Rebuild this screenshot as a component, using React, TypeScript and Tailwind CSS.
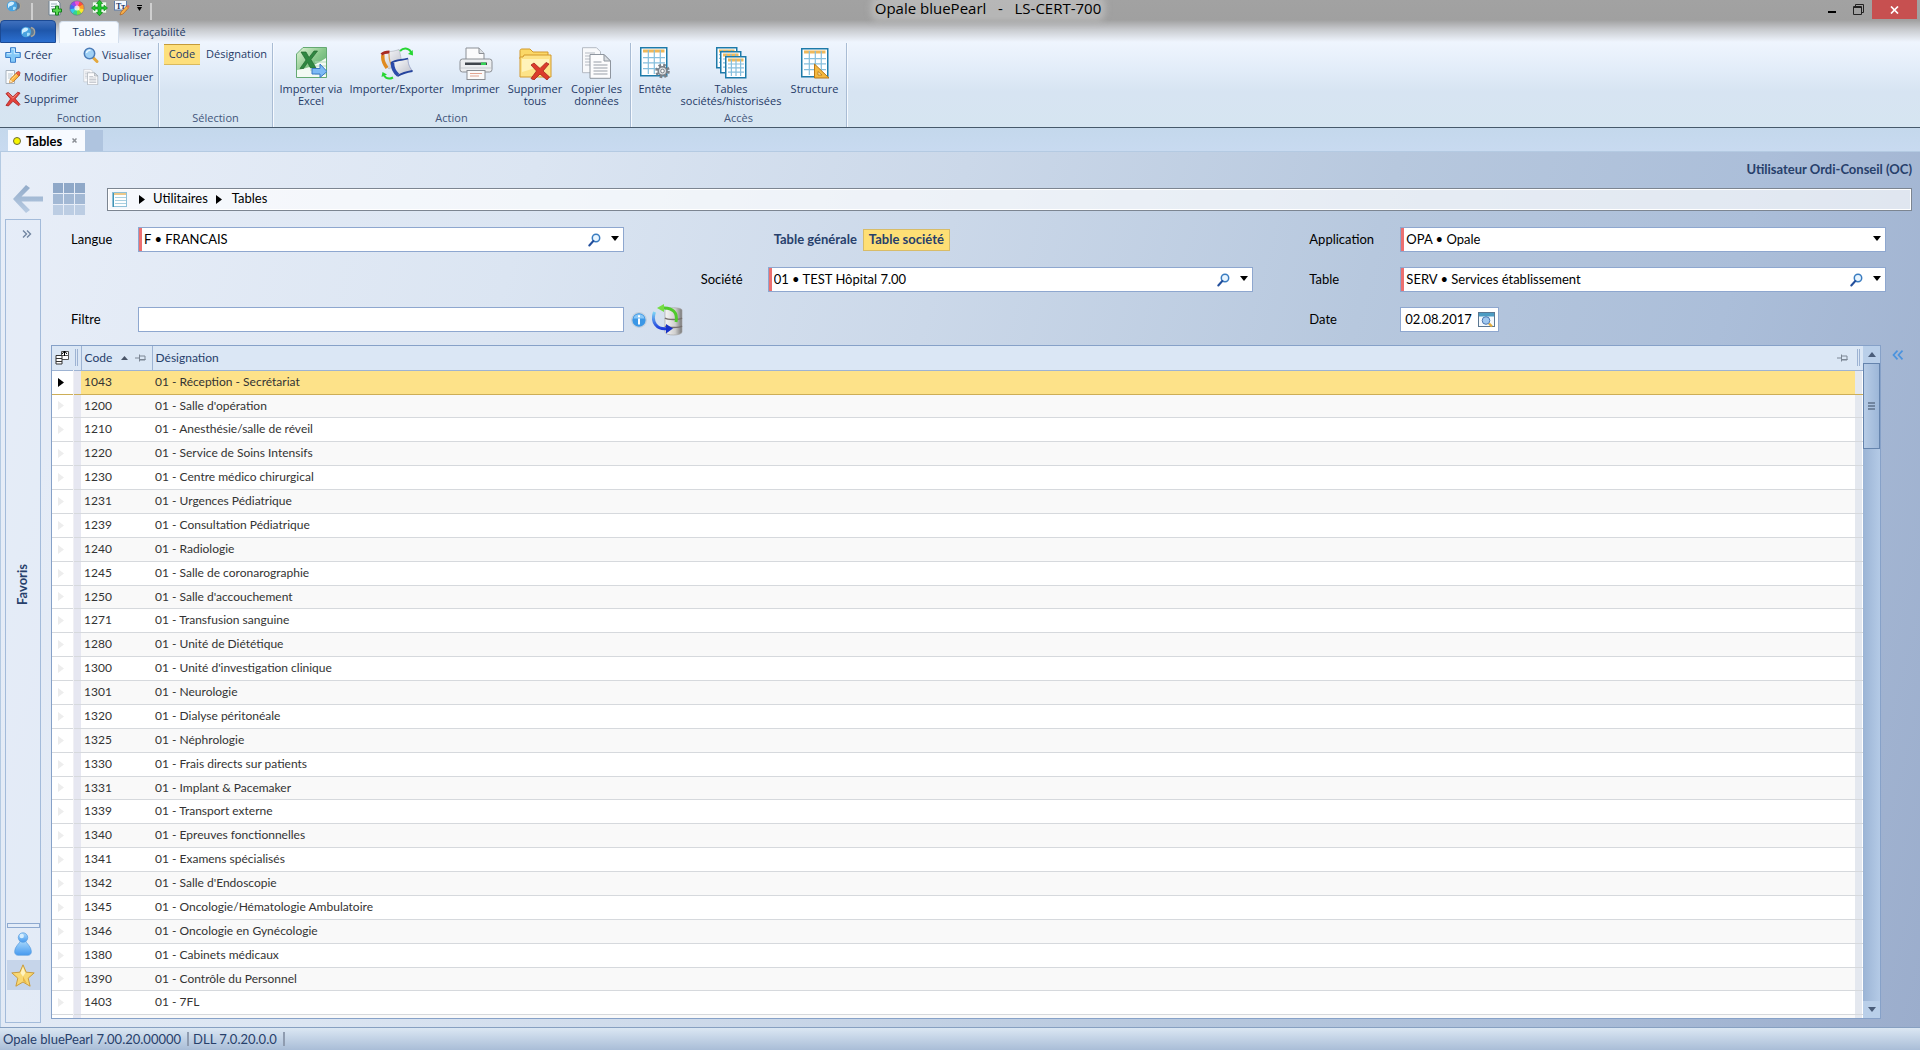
import type { ReactNode } from "react";

const rows: [string, string][] = [
  ["1043", "Réception - Secrétariat"],
  ["1200", "Salle d'opération"],
  ["1210", "Anesthésie/salle de réveil"],
  ["1220", "Service de Soins Intensifs"],
  ["1230", "Centre médico chirurgical"],
  ["1231", "Urgences Pédiatrique"],
  ["1239", "Consultation Pédiatrique"],
  ["1240", "Radiologie"],
  ["1245", "Salle de coronarographie"],
  ["1250", "Salle d'accouchement"],
  ["1271", "Transfusion sanguine"],
  ["1280", "Unité de Diététique"],
  ["1300", "Unité d'investigation clinique"],
  ["1301", "Neurologie"],
  ["1320", "Dialyse péritonéale"],
  ["1325", "Néphrologie"],
  ["1330", "Frais directs sur patients"],
  ["1331", "Implant & Pacemaker"],
  ["1339", "Transport externe"],
  ["1340", "Epreuves fonctionnelles"],
  ["1341", "Examens spécialisés"],
  ["1342", "Salle d'Endoscopie"],
  ["1345", "Oncologie/Hématologie Ambulatoire"],
  ["1346", "Oncologie en Gynécologie"],
  ["1380", "Cabinets médicaux"],
  ["1390", "Contrôle du Personnel"],
  ["1403", "7FL"],
];

/* ---------- icons ---------- */

function Globe({ className = "" }: { className?: string }) {
  return (
    <svg width="16" height="12" viewBox="0 0 16 12" className={className}>
      <circle cx="10.5" cy="6" r="4.6" fill="#5b7a96" />
      <path d="M11 1.5a4.6 4.6 0 0 1 0 9" fill="none" stroke="#a9a49a" strokeWidth="1.4" />
      <circle cx="6" cy="6" r="5.2" fill="#4aa3df" />
      <path d="M2 4c2-3 5-2.5 6-1.5S6 6 4.500 6 3 8 2 8Z" fill="#cfeeff" />
      <path d="M7 7c1.500-.5 3 0 3 1s-2 2.500-3 2Z" fill="#a5dcf7" />
    </svg>
  );
}

function PageAdd() {
  return (
    <svg width="16" height="15" viewBox="0 1 16 15">
      <path d="M2 0h8l3 3v12H2Z" fill="#f6fbff" stroke="#6f8191" />
      <path d="M4 4h6M4 6.500h6M4 9h4" stroke="#9db0be" />
      <path d="M8.500 6h3v3h3v3h-3v3h-3v-3h-3V9h3Z" fill="#57d94f" stroke="#167f1e" />
    </svg>
  );
}

function ColorWheel() {
  const colors = ["#ff4b3a", "#ff9d2b", "#ffe92e", "#7ee33c", "#34d88d", "#35c9f0", "#3a6df0", "#9446ec", "#f04fd0"];
  return (
    <svg width="16" height="16" viewBox="-8 -8 16 16">
      {colors.map((c, i) => (
        <path key={c} d="M0 0L0 -7.300A7.300 7.300 0 0 1 4.900 -5.400Z" fill={c} transform={`rotate(${i * 40 + 20})`} />
      ))}
      <circle r="2.600" fill="#fff" opacity=".75" />
      <circle r="7.200" fill="none" stroke="#6b6b8b" strokeWidth=".6" />
    </svg>
  );
}

function MoveArrows() {
  return (
    <svg width="17" height="16" viewBox="0 0 17 16">
      <rect x="1.500" y="2" width="14" height="11" fill="#eefaee" stroke="#88a088" strokeWidth=".6" />
      <path d="M8.500 0l3 3.500H10V7h3V5.200L16.500 8 13 10.800V9h-3v3.500h1.500l-3 3.300-3-3.300H7V9H4v1.800L.5 8 4 5.200V7h3V3.500H5.500Z" fill="#20c52b" stroke="#0b8a17" strokeWidth=".7" />
    </svg>
  );
}

function FontIcon() {
  return (
    <svg width="16" height="15" viewBox="0 0 16 15">
      <rect x=".5" y="-1" width="12" height="10" fill="#f3f8ff" stroke="#5d7dab" />
      <text x="2" y="7.500" fontSize="8" fontWeight="700" fontFamily="Liberation Serif, serif" fill="#1c3665">Tт</text>
      <path d="M6 14l1-3 5.500-6 2 2L9 13Z" fill="#f4ad4b" stroke="#b0641e" strokeWidth=".7" />
      <path d="M12.500 5l2 2 1.200-1.500-1.800-1.800Z" fill="#e56f61" />
    </svg>
  );
}

function PlusIcon() {
  return (
    <svg width="16" height="16" viewBox="0 0 16 16">
      <path d="M5.500.7h5v4.800h4.800v5h-4.800v4.800h-5v-4.800H.7v-5h4.800Z" fill="#83c8f7" stroke="#3c7fcb" />
      <path d="M6.700 2h2.600v4.700H14M2 6.700h4.700" stroke="#d3eeff" fill="none" />
    </svg>
  );
}

function PencilIcon() {
  return (
    <svg width="16" height="16" viewBox="0 0 16 16">
      <path d="M1 1.500h8.500v13H1Z" fill="#fafcfd" stroke="#a7b2bd" />
      <path d="M3 5h5M3 7h4M3 9h3" stroke="#b9c5cf" />
      <path d="M4.500 13.800l1-4 6.700-6.600 2.800 2.800-6.600 6.700Z" fill="#fbb540" stroke="#b96d18" strokeWidth=".8" />
      <path d="M11.200 4.200l1.600-1.700c1.200-.6 2.700.8 2.200 2L13.800 6.700Z" fill="#ee5e4a" stroke="#b03020" strokeWidth=".5" />
      <path d="M4.300 14l1-3.400 2.400 2.200Z" fill="#f6dfb8" />
      <path d="M6.500 10.700l5.200-5.100" stroke="#ffe093" />
    </svg>
  );
}

function RedCross() {
  return (
    <svg width="16" height="16" viewBox="0 0 17 16">
      <path d="M1 2.300L3.300.8 8.400 5.700 13.500.8l2.500.9-5.100 6.100 5 5.900-1.400 1.500-6-4.800-4.800 5-2.700-.6 4.900-6.900Z" fill="#e2413a" stroke="#a51e1e" strokeWidth=".8" />
      <path d="M3 2l5.400 5.200 4.800-4.700" stroke="#f79c92" strokeWidth=".9" fill="none" />
    </svg>
  );
}

function Magnifier() {
  return (
    <svg width="16" height="16" viewBox="0 0 16 16">
      <path d="M10 10.500l4 4" stroke="#e4a83c" strokeWidth="3" strokeLinecap="round" />
      <circle cx="6.500" cy="6.500" r="5.200" fill="#9fd0f5" stroke="#4c7cb8" strokeWidth="1.500" />
      <path d="M3.500 6c.3-2 2-3 4-2.500" stroke="#e9f7ff" strokeWidth="1.500" fill="none" />
    </svg>
  );
}

function CopyIcon({ size }: { size: number }) {
  return (
    <svg width={size} height={size} viewBox="0 0 31 32">
      <path d="M1 .7h14l4 4v21H1Z" fill="#f8f9fb" stroke="#b4bac3" />
      <path d="M3.500 6h10M3.500 9h10M3.500 12h10M3.500 15h10M3.500 18h10" stroke="#b5bac2" />
      <path d="M8.500 7.500h14l6.500 6.500v17.300H8.500Z" fill="#fcfcfd" stroke="#8f969f" />
      <path d="M22.500 7.500V14H29Z" fill="#d9dde2" stroke="#8f969f" />
      <path d="M12 15h8M12 18h14M12 21h14M12 24h14M12 27h14" stroke="#979da6" />
    </svg>
  );
}

function ExcelIcon() {
  return (
    <svg width="31" height="31" viewBox="0 0 31 31">
      <defs>
        <linearGradient id="xl" x1="0" y1="0" x2="1" y2="1">
          <stop offset="0" stopColor="#e3f4d7" />
          <stop offset=".5" stopColor="#86c78a" />
          <stop offset="1" stopColor="#4f9c66" />
        </linearGradient>
      </defs>
      <path d="M7 .5h23.500v30H.5V7Z" fill="url(#xl)" stroke="#64a972" />
      <path d="M1 23c9-1 17-4 29-12v19H1Z" fill="#f3faf3" />
      <path d="M19 15h11M17 19h13M14 23h16M19 27h11" stroke="#b4d9bb" />
      <path d="M5 5h5l3 5.500L18 4h3.500l-6.500 8.500L20 21h-5.500l-2.800-5.500L7.500 21.500H4l6-8.500Z" fill="#2f8741" stroke="#23672f" strokeWidth=".7" />
      <path d="M16 21.500h8v-4.500l7 7.500-7 6V27h-8Z" fill="#7dbaf5" stroke="#3a78c6" />
    </svg>
  );
}

function TransferIcon() {
  return (
    <svg width="34" height="33" viewBox="0 0 34 33">
      <defs>
        <linearGradient id="bookA" x1="0" y1="0" x2="1" y2="1">
          <stop offset="0" stopColor="#ffffff" />
          <stop offset="1" stopColor="#b9bcc8" />
        </linearGradient>
      </defs>
      <path d="M2 7c5-4 8-1 17-4.500 1.500 5 2 9 3 14-5 1-8 2-13 5.500C4 18 2 12 2 7Z" fill="url(#bookA)" stroke="#a9adb9" strokeWidth=".6" />
      <path d="M3 8c-1 5 1 9 4 13" fill="none" stroke="#e08b21" strokeWidth="3.500" />
      <path d="M1.500 7.500c2-2 4-2.500 8-2.500" stroke="#a92c22" strokeWidth="2.800" fill="none" />
      <path d="M9 7c0 5 1 9 3 12" fill="none" stroke="#d9a35a" strokeWidth="1.200" />
      <path d="M11 16c5-3 10-2 17-4.500 0 5 1 8 4.500 12.500-6 1-10 2-15 5.500-4-3-6.500-8-6.500-13.500Z" fill="url(#bookA)" stroke="#7986b6" strokeWidth=".6" />
      <path d="M12.500 16c0 5 2 9 5.500 12" fill="none" stroke="#2b4bab" strokeWidth="3.500" />
      <path d="M11 16c5-3.500 10-2.500 17-4.500M17.500 29c5-3 9-4 15-5" fill="none" stroke="#25449e" strokeWidth="1.800" />
      <path d="M20 4c4-4 10-3 11.500 2.500" fill="none" stroke="#27d633" strokeWidth="2" />
      <path d="M28 7l5 1.500-.3-5.500Z" fill="#27d633" />
      <path d="M13 30.500c-4 2-7 1-9-2" fill="none" stroke="#27d633" strokeWidth="2" />
      <path d="M1.500 30l1-5 4.500 2.500Z" fill="#27d633" />
    </svg>
  );
}

function PrinterIcon() {
  return (
    <svg width="34" height="33" viewBox="0 0 34 33">
      <path d="M7 1h13l5 5.500V15H7Z" fill="#fbfbfc" stroke="#8b8f95" />
      <path d="M20 1v5.500h5" fill="#dcdfe3" stroke="#8b8f95" />
      <rect x="1" y="12" width="32" height="13" rx="2.500" fill="#eceef0" stroke="#8b8f95" />
      <rect x="6" y="15.500" width="22" height="2.500" fill="#3f454b" />
      <rect x="22" y="15.500" width="5" height="2.500" fill="#35d255" />
      <path d="M2 21h30" stroke="#c8ccd1" />
      <rect x="8" y="23.500" width="18" height="9" fill="#fafafa" stroke="#8b8f95" />
      <path d="M11 26.500h12M11 29h9" stroke="#e1a491" />
    </svg>
  );
}

function FolderDelete() {
  return (
    <svg width="33" height="33" viewBox="0 0 33 33">
      <path d="M1 3.500C1 2.500 2 2 3 2h8l3 3h15v7H1Z" fill="#fbd867" stroke="#d2992c" />
      <path d="M1 10h3l1-2h27v22H1Z" fill="#fde388" stroke="#d2992c" />
      <path d="M3 12h27v5L3 25Z" fill="#fff3ba" />
      <path d="M12 18l3-2 6 5.500 6-6 3 1.500-6 7 6.500 6-2.500 3-7-6-6 6-3-1.500 5.500-7.500Z" fill="#dc3b2b" stroke="#a2241b" strokeWidth=".8" />
    </svg>
  );
}

function Sheet({ x, y, w, h }: { x: number; y: number; w: number; h: number }) {
  return (
    <g transform={`translate(${x} ${y})`}>
      <rect x=".75" y=".75" width={w} height={h} fill="#fff" stroke="#1d7aa9" strokeWidth="1.500" />
      <rect x="3" y="2.500" width={w - 4.500} height="3" fill="#f0b95a" />
      <path
        d={`M3 ${h * 0.38}H${w - 1}M3 ${h * 0.57}H${w - 1}M3 ${h * 0.77}H${w - 1}M${w * 0.32} 3V${h - 1}M${w * 0.55} 3V${h - 1}M${w * 0.78} 3V${h - 1}`}
        stroke="#86bfdd"
        strokeWidth="1.200"
      />
    </g>
  );
}

function TableGear() {
  return (
    <svg width="30" height="32" viewBox="0 0 30 32">
      <Sheet x={0} y={0} w={26} h={28} />
      <circle cx="22.500" cy="24" r="5.800" fill="none" stroke="#7b8188" strokeWidth="3" strokeDasharray="2.500 2.050" />
      <circle cx="22.500" cy="24" r="4.300" fill="#d9dcdf" stroke="#7b8188" strokeWidth="1.500" />
      <circle cx="22.500" cy="24" r="1.800" fill="#fff" stroke="#7b8188" />
    </svg>
  );
}

function TableStack() {
  return (
    <svg width="31" height="32" viewBox="0 0 31 32">
      <Sheet x={0} y={0} w={20} h={20} />
      <Sheet x={4} y={4} w={20} h={21} />
      <Sheet x={9} y={9} w={20} h={21} />
    </svg>
  );
}

function TableSquare() {
  return (
    <svg width="30" height="32" viewBox="0 0 30 32">
      <Sheet x={1} y={1} w={26} h={28} />
      <path d="M14.500 17v14H29Z" fill="#f4b83e" stroke="#b87717" />
      <path d="M18 24.500v3.500h4Z" fill="#fff0c4" stroke="#b87717" strokeWidth=".8" />
    </svg>
  );
}

function SearchGlyph() {
  return (
    <svg width="13" height="14" viewBox="0 0 13 14">
      <circle cx="8" cy="5" r="3.700" fill="#e8f5ff" stroke="#3a7cc0" strokeWidth="1.500" />
      <path d="M5.300 8L1.300 12.500" stroke="#234f9c" strokeWidth="2" strokeLinecap="round" />
    </svg>
  );
}

function Pin() {
  return (
    <svg width="11" height="8" viewBox="0 0 11 8">
      <path d="M0 4h4M4.500.5v7M5 2h5v4H5" fill="none" stroke="#7c8795" />
      <path d="M5 5.500h5.500" stroke="#7c8795" />
    </svg>
  );
}

function DatabaseRefresh() {
  return (
    <svg width="32" height="32" viewBox="0 0 32 32">
      <defs>
        <linearGradient id="db" x1="0" x2="1">
          <stop offset="0" stopColor="#f7f7f7" />
          <stop offset=".6" stopColor="#d0d0cf" />
          <stop offset="1" stopColor="#777" />
        </linearGradient>
        <linearGradient id="arc" x1="0" y1="0" x2="0" y2="1">
          <stop offset="0" stopColor="#7fd6f5" />
          <stop offset="1" stopColor="#1d3cdc" />
        </linearGradient>
      </defs>
      <path d="M13 6c0-3 17-3 17 0v22c0 4-17 4-17 0Z" fill="url(#db)" stroke="#a8a8a8" strokeWidth=".7" />
      <path d="M13 14c2 2 15 2 17 0M13 22c2 2 15 2 17 0" stroke="#77716f" strokeWidth="1.300" fill="none" />
      <path d="M2.500 8c-3.500 10 2 18 13 16.500" fill="none" stroke="url(#arc)" strokeWidth="3" />
      <path d="M14 20l7 4.500-7 5Z" fill="#1632c8" />
      <path d="M24 18c2-9-3-15-14-14" fill="none" stroke="#4fca2b" strokeWidth="3" />
      <path d="M12 0v8L5 4Z" fill="#74dd43" />
    </svg>
  );
}

function CalendarIcon() {
  return (
    <svg width="17" height="16" viewBox="0 0 17 16">
      <rect x=".5" y=".5" width="16" height="14" fill="#f4f8fc" stroke="#5b7791" />
      <rect x="1" y="1" width="15" height="3.500" fill="#4c9cc3" />
      <circle cx="8" cy="8.500" r="3.800" fill="#9fc7ef" stroke="#4d77b0" />
      <path d="M11 11.500l3 3" stroke="#e6ad39" strokeWidth="2.400" />
    </svg>
  );
}

function BackArrow() {
  return (
    <svg width="31" height="30" viewBox="0 0 31 30">
      <defs>
        <linearGradient id="bk" x1="0" y1="0" x2="0" y2="1">
          <stop offset="0" stopColor="#92abc9" />
          <stop offset="1" stopColor="#b9cce3" />
        </linearGradient>
      </defs>
      <path d="M0 15L13 1l4 3L8.500 12.500H30v5H8.500L17 26l-4 3Z" fill="url(#bk)" />
    </svg>
  );
}

function TilesIcon() {
  const shades = ["#8fa8c8", "#a2b8d4", "#bccde3"];
  return (
    <svg width="32" height="32" viewBox="0 0 32 32">
      {shades.map((c, r) => [0, 11, 22].map((x) => <rect key={c + x} x={x} y={r * 11} width="10" height="10" fill={c} />))}
    </svg>
  );
}

function Caret({ up = false }: { up?: boolean }) {
  return (
    <svg width="8" height="5" viewBox="0 0 8 5">
      <path d={up ? "M0 5L4 0L8 5Z" : "M0 0H8L4 5Z"} fill="currentColor" />
    </svg>
  );
}

function PlayMark() {
  return (
    <svg width="6" height="9" viewBox="0 0 6 9">
      <path d="M0 0L6 4.500L0 9Z" fill="currentColor" />
    </svg>
  );
}

/* ---------- ribbon ---------- */

function Group({ title, className, children }: { title: string; className: string; children: ReactNode }) {
  return (
    <section className={`flex flex-col border-r border-[#a9bcd4] shadow-[1px_0_0_#f6faff] ${className}`}>
      <div className="flex-1">{children}</div>
      <h2 className="pb-[2px] text-center leading-[14px] text-[#43567b]">{title}</h2>
    </section>
  );
}

function SmallAction({ icon, label }: { icon: ReactNode; label: string }) {
  return (
    <button className="flex h-[22px] items-center gap-[3px] whitespace-nowrap">
      {icon}
      {label}
    </button>
  );
}

function BigAction({ icon, label, className }: { icon: ReactNode; label: string; className: string }) {
  return (
    <button className={`flex flex-col items-center pt-1 ${className}`}>
      <span className="flex h-9 items-start justify-center">{icon}</span>
      <span className="leading-[12px] whitespace-pre-line">{label}</span>
    </button>
  );
}

function Divider() {
  return <span className="mt-1 h-2 w-[3px] border border-[#cfcfcf]" />;
}

function Ribbon() {
  return (
    <header className="bg-[linear-gradient(#a2a2a2_0px,#a0a0a0_20px,#c6c8cc_29px,#eff5fe_42px,#e3edf9_68px,#d7e4f2_92px,#d6e5f1_127px)] border-b border-[#46596b] font-['Open_Sans',sans-serif] text-[11px] text-[#253a66]">
      <div className="grid h-5 grid-cols-[1fr_auto_1fr] items-start">
        <div className="flex items-start pl-[6px]">
          <Globe />
          <span className="ml-[9px] mr-[14px] pt-1"><Divider /></span>
          <div className="flex gap-[6px]">
            <button aria-label="Nouveau"><PageAdd /></button>
            <button aria-label="Couleurs"><ColorWheel /></button>
            <button aria-label="Disposition"><MoveArrows /></button>
            <button aria-label="Police"><FontIcon /></button>
          </div>
          <button aria-label="Personnaliser" className="mt-[5px] ml-[7px] flex flex-col items-center gap-px text-black">
            <span className="h-px w-[5px] bg-black" />
            <svg width="5" height="4" viewBox="0 0 5 4"><path d="M0 0H5L2.500 4Z" /></svg>
          </button>
          <span className="ml-2 pt-1"><Divider /></span>
        </div>
        <h1 className="ml-14 rounded bg-[#c4c4c4]/60 text-[15px] leading-[17px] whitespace-pre text-black shadow-[0_0_6px_4px_rgba(200,200,200,0.6)]">Opale bluePearl   -   LS-CERT-700</h1>
        <div className="flex items-start justify-end pr-[3px]">
          <button aria-label="Réduire" className="flex h-[19px] w-6 items-center justify-center">
            <span className="mt-1 h-[2px] w-2 bg-black" />
          </button>
          <button aria-label="Restaurer" className="flex h-[19px] w-7 items-center justify-center">
            <svg width="11" height="11" viewBox="0 0 11 11">
              <path d="M2.500 2V.5h8v8H9" fill="none" stroke="#222" />
              <path d="M.5 2.500h8v8h-8ZM0 3.500h9" fill="none" stroke="#222" />
            </svg>
          </button>
          <button aria-label="Fermer" className="flex h-[19px] w-[45px] items-center justify-center bg-[#c75050]">
            <svg width="9" height="8" viewBox="0 0 9 8"><path d="M1 .5L8 7.500M8 .5L1 7.500" stroke="#fff" strokeWidth="1.700" /></svg>
          </button>
        </div>
      </div>
      <nav className="flex h-[23px] items-end gap-[3px]">
        <button aria-label="Menu Opale" className="flex h-[23px] w-14 items-center justify-center rounded-t border border-[#1c4a94] bg-[linear-gradient(#3f70bd,#1f57ab_45%,#2b6fd0)]">
          <Globe />
        </button>
        <button className="h-[22px] w-[60px] rounded-t border border-b-0 border-[#d3deec] bg-[#f6faff]">Tables</button>
        <button className="h-[22px] w-[74px]">Traçabilité</button>
      </nav>
      <div className="flex h-[84px]">
        <Group title="Fonction" className="w-[159px]">
          <div className="grid grid-cols-[78px_1fr] pt-px pl-[5px]">
            <SmallAction icon={<PlusIcon />} label="Créer" />
            <SmallAction icon={<Magnifier />} label="Visualiser" />
            <SmallAction icon={<PencilIcon />} label="Modifier" />
            <SmallAction icon={<CopyIcon size={16} />} label="Dupliquer" />
            <SmallAction icon={<RedCross />} label="Supprimer" />
          </div>
        </Group>
        <Group title="Sélection" className="w-[114px]">
          <div className="flex gap-[6px] pt-px pl-[5px]">
            <button className="h-[21px] w-9 border-y border-t-[#c49a3a] border-b-[#d9b95e] bg-[#fddf7c]">Code</button>
            <button className="h-[21px]">Désignation</button>
          </div>
        </Group>
        <Group title="Action" className="w-[358px]">
          <div className="flex items-start">
            <BigAction className="w-[76px]" icon={<ExcelIcon />} label={"Importer via\nExcel"} />
            <BigAction className="w-[95px]" icon={<TransferIcon />} label="Importer/Exporter" />
            <BigAction className="w-[63px]" icon={<PrinterIcon />} label="Imprimer" />
            <BigAction className="w-[56px]" icon={<FolderDelete />} label={"Supprimer\ntous"} />
            <BigAction className="w-[67px]" icon={<CopyIcon size={32} />} label={"Copier les\ndonnées"} />
          </div>
        </Group>
        <Group title="Accès" className="w-[216px]">
          <div className="flex items-start">
            <BigAction className="w-[48px]" icon={<TableGear />} label="Entête" />
            <BigAction className="w-[104px]" icon={<TableStack />} label={"Tables\nsociétés/historisées"} />
            <BigAction className="w-[63px]" icon={<TableSquare />} label="Structure" />
          </div>
        </Group>
      </div>
    </header>
  );
}

/* ---------- form ---------- */

function SelectField({ id, value, search = false }: { id: string; value: string; search?: boolean }) {
  return (
    <div className="relative">
      <select id={id} className="block h-[25px] w-full appearance-none border border-[#8ea7cf] bg-white pl-[5px] text-black shadow-[inset_3px_0_0_#ec7070]">
        <option>{value}</option>
      </select>
      {search && (
        <button type="button" aria-label="Rechercher" className="absolute top-[6px] right-[23px]">
          <SearchGlyph />
        </button>
      )}
      <span className="pointer-events-none absolute top-[9px] right-[5px] flex text-black">
        <Caret />
      </span>
    </div>
  );
}

function Criteria() {
  return (
    <form className="grid grid-cols-[67px_1fr_77px_67px_1fr_56px_91px_1fr] items-center gap-y-[15px] pr-[34px] pl-[30px]">
      <label htmlFor="langue">Langue</label>
      <SelectField id="langue" value="F • FRANCAIS" search />
      <div className="col-span-2" />
      <div className="flex gap-[6px] pl-[6px] font-bold text-[#27406b]">
        <button type="button">Table générale</button>
        <button type="button" className="h-[22px] border border-[#d8bc68] bg-[#fedf75] px-[5px]">Table société</button>
      </div>
      <div />
      <label htmlFor="application">Application</label>
      <SelectField id="application" value="OPA • Opale" />

      <div className="col-span-3" />
      <label htmlFor="societe">Société</label>
      <SelectField id="societe" value="01 • TEST Hôpital 7.00" search />
      <div />
      <label htmlFor="table">Table</label>
      <SelectField id="table" value="SERV • Services établissement" search />

      <label htmlFor="filtre">Filtre</label>
      <input id="filtre" type="text" className="h-[25px] w-full border border-[#8ea7cf] bg-white px-1" />
      <div className="flex h-[25px] items-center pl-[7px]">
        <svg width="16" height="16" viewBox="0 0 16 16">
          <circle cx="8" cy="8" r="7.300" fill="#3b97e6" stroke="#c5d0dc" strokeWidth="1.300" />
          <path d="M2.500 6.500a5.700 5.700 0 0 1 11 0Z" fill="#8ac8f7" />
          <path d="M8 3.200v2M8 6.500v6" stroke="#fff" strokeWidth="2" />
        </svg>
        <button type="button" aria-label="Actualiser" className="ml-[5px]"><DatabaseRefresh /></button>
      </div>
      <div className="col-span-3" />
      <label htmlFor="date">Date</label>
      <div className="flex h-[25px] w-[99px] items-center justify-between border border-[#8ea7cf] bg-white pr-[3px] pl-1">
        <input id="date" type="text" defaultValue="02.08.2017" className="w-[72px] min-w-0 text-black" />
        <button type="button" aria-label="Calendrier"><CalendarIcon /></button>
      </div>
    </form>
  );
}

/* ---------- data grid ---------- */

function DataGrid() {
  return (
    <div className="flex min-h-0 flex-1 border border-[#86a1c8] bg-white">
      <div className="min-w-0 flex-1 overflow-hidden">
        <table className="w-full table-fixed border-collapse text-left text-[12px]">
          <colgroup>
            <col className="w-[21px]" />
            <col className="w-[8px]" />
            <col className="w-[71px]" />
            <col />
            <col className="w-[7px]" />
            <col className="w-px" />
          </colgroup>
          <thead>
            <tr className="h-[24px] border-b border-[#9db3d3] bg-[#dbe7f5] text-[#27406b]">
              <th colSpan={2} className="border-r border-[#9db3d3] p-0">
                <div className="flex items-center justify-between pr-[3px] pl-[3px]">
                  <svg width="15" height="15" viewBox="0 0 15 15">
                    <path d="M6.500 1.500h7v8h-7ZM6.500 5.500h7" fill="#fff" stroke="#555" />
                    <path d="M1 5.500h6v8.500H1ZM1 8.500h6M1 11.500h6" fill="#fff" stroke="#333" />
                    <path d="M7 4l2.500-3L12 4M9.500 1v5" stroke="#000" fill="none" />
                  </svg>
                  <span className="h-[17px] w-[3px] border-x border-[#9db3d3]" />
                </div>
              </th>
              <th className="border-r border-[#9db3d3] p-0 font-normal">
                <div className="flex items-center justify-between pr-[6px] pl-[3px]">
                  Code
                  <span className="flex items-center gap-[7px] text-[#4a5568]">
                    <svg width="7" height="4" viewBox="0 0 7 4"><path d="M0 4L3.500 0L7 4Z" fill="currentColor" /></svg>
                    <Pin />
                  </span>
                </div>
              </th>
              <th colSpan={3} className="p-0 font-normal">
                <div className="flex items-center justify-between pr-[3px] pl-[3px]">
                  Désignation
                  <span className="flex items-center gap-[9px]">
                    <Pin />
                    <span className="h-[17px] w-[3px] border-x border-[#9db3d3]" />
                  </span>
                </div>
              </th>
            </tr>
          </thead>
          <tbody className="text-[#333]">
            {rows.map(([code, name], i) => (
              <tr
                key={code}
                className={
                  i === 0
                    ? "h-[24px] border-b border-[#cdae57] bg-[#fde289]"
                    : "h-[24px] border-b border-[#d6d9dd] even:bg-[#f9f9f9] nth-[8n+2]:h-[23px]"
                }
              >
                <td className={i === 0 ? "bg-white p-0 pl-[6px] text-black" : "bg-white p-0 pl-[6px] text-[#ededed]"}>
                  <PlayMark />
                </td>
                <td className="border-l border-[#f0f0f4] bg-[#e6e7f1] p-0" />
                <td className="p-0 pl-[3px] leading-[20px]">{code}</td>
                <td className="p-0 pl-[3px] leading-[20px]">01 - {name}</td>
                <td className="bg-[#e4e8ef] p-0" />
                <td className="bg-white p-0" />
              </tr>
            ))}
            <tr className="h-[24px] bg-[#f9f9f9]">
              <td className="bg-white p-0" />
              <td className="bg-[#e6e7f1] p-0" />
              <td colSpan={2} className="p-0" />
              <td className="bg-[#e4e8ef] p-0" />
              <td className="bg-white p-0" />
            </tr>
          </tbody>
        </table>
      </div>
      <div className="flex w-[17px] flex-col bg-[linear-gradient(90deg,#9bb4d5,#b4cae6)] text-[#4a5d7a]">
        <button aria-label="Défiler vers le haut" className="flex h-[17px] items-center justify-center bg-[#b9cfe9]"><Caret up /></button>
        <div className="flex h-[86px] flex-col items-center justify-center gap-px border border-[#6584ad] bg-[linear-gradient(90deg,#b7cce6,#9db7d8)]">
          <span className="h-[2px] w-[7px] bg-[#71859f]" />
          <span className="h-[2px] w-[7px] bg-[#71859f]" />
          <span className="h-[2px] w-[7px] bg-[#71859f]" />
        </div>
        <div className="flex-1" />
        <button aria-label="Défiler vers le bas" className="flex h-[17px] items-center justify-center bg-[#b9cfe9]"><Caret /></button>
      </div>
    </div>
  );
}

function Favorites() {
  return (
    <aside className="flex w-9 flex-col items-center border border-[#a3bbda] bg-[#e3ebf7]/50">
      <button aria-label="Déplier les favoris" className="mt-[10px] ml-[8px]">
        <svg width="10" height="8" viewBox="0 0 10 8"><path d="M1 .5L4.500 4L1 7.500M5 .5L8.500 4L5 7.500" fill="none" stroke="#7285a1" strokeWidth="1.400" /></svg>
      </button>
      <div className="flex flex-1 items-center justify-center pt-2">
        <span className="rotate-180 text-[13px] font-bold text-[#27406b] [writing-mode:vertical-rl]">Favoris</span>
      </div>
      <div className="h-[5px] w-[33px] border border-[#8ea9cf] bg-[#e3ecf8]" />
      <button aria-label="Utilisateur" className="flex h-[32px] items-center">
        <svg width="18" height="24" viewBox="0 0 19 25">
          <defs>
            <linearGradient id="usr" x1="0" y1="0" x2="0" y2="1">
              <stop offset="0" stopColor="#a9d8fb" />
              <stop offset="1" stopColor="#469af0" />
            </linearGradient>
          </defs>
          <path d="M7 9C6 12 .7 15 .7 20.500c0 2 1 3.800 3.300 3.800h11c2.300 0 3.300-1.800 3.300-3.800C18.300 15 13 12 12 9Z" fill="url(#usr)" stroke="#5b9ee0" strokeWidth=".8" />
          <circle cx="9.500" cy="5.700" r="5" fill="url(#usr)" stroke="#5b9ee0" strokeWidth=".8" />
          <circle cx="8.200" cy="4" r="2.300" fill="#d6eefe" />
        </svg>
      </button>
      <button aria-label="Favoris" className="mb-8 flex h-[30px] w-[33px] items-center justify-center bg-[#c6d5ea]">
        <svg width="24" height="23" viewBox="0 0 24 23">
          <path d="M12 .8l3.200 7.400 8 .7-6 5.300 1.900 8L12 18l-7.100 4.200 1.900-8-6-5.300 8-.7Z" fill="#f8d873" stroke="#c99c3f" />
          <path d="M12 3l2.300 6L12 12.500 9.500 9Z" fill="#fff3bf" />
          <path d="M12 12.500l4 7-4-2.500Z" fill="#e9b544" />
        </svg>
      </button>
    </aside>
  );
}

export default function App() {
  return (
    <div className="flex h-screen flex-col overflow-hidden bg-[#c5daee] font-['Lato',sans-serif] text-[13px] text-black">
      <Ribbon />
      <div className="flex h-[23px] items-end bg-[linear-gradient(#c4d8ec,#c8daf0)] pl-2">
        <div className="flex h-[21px] w-[77px] items-center bg-[#f7faff] pl-[5px] font-bold">
          <span className="size-2 rounded-full border border-[#6b6b3a] bg-[#f6f500]" />
          <span className="ml-[5px] leading-[20px]">Tables</span>
          <button aria-label="Fermer l'onglet" className="ml-auto mr-2">
            <svg width="5" height="5" viewBox="0 0 5 5"><path d="M.5.5l4 4M4.500.5l-4 4" stroke="#8b8f96" strokeWidth="1.500" /></svg>
          </button>
        </div>
        <div className="h-[21px] w-[18px] bg-[#afc4df]" />
      </div>
      <main className="flex min-h-0 flex-1 flex-col border-t border-l border-[#b4cae2] bg-[linear-gradient(105deg,#e8eef8_0%,#dbe5f2_25%,#cbd8e9_45%,#b7c8de_65%,#abbed9_82%,#9badcc_100%)] pb-1">
        <div className="px-[8px] pt-2 text-right leading-[18px] font-bold text-[#27406b]">Utilisateur Ordi-Conseil (OC)</div>
        <div className="mt-[5px] flex items-center pr-[8px] pl-3">
          <button aria-label="Retour"><BackArrow /></button>
          <button aria-label="Modules" className="ml-[9px]"><TilesIcon /></button>
          <nav className="ml-[22px] flex h-[23px] flex-1 items-center border border-[#7c8591] bg-white/65 pl-1 shadow-[inset_0_0_0_1px_#fff]">
            <svg width="15" height="15" viewBox="0 0 15 15">
              <rect x=".5" y=".5" width="14" height="14" fill="#fdfefe" stroke="#8ec0d8" />
              <path d="M1 2h13" stroke="#ecc88a" strokeWidth="2" />
              <path d="M1.500 1v14" stroke="#3f93b5" />
              <path d="M3 5.500h11M3 8.500h11M3 11.500h11" stroke="#a9cfe0" />
            </svg>
            <span className="ml-3"><PlayMark /></span>
            <a href="#utilitaires" className="ml-2">Utilitaires</a>
            <span className="ml-2"><PlayMark /></span>
            <a href="#tables" className="ml-[10px]">Tables</a>
          </nav>
        </div>
        <div className="mt-1 flex min-h-0 flex-1 pl-1">
          <Favorites />
          <div className="flex min-w-0 flex-1 flex-col pt-2">
            <Criteria />
            <div className="mt-[13px] flex min-h-0 flex-1 pr-[15px] pb-1 pl-[10px]">
              <DataGrid />
              <button aria-label="Panneau latéral" className="mt-1 ml-[10px] self-start p-px">
                <svg width="12" height="10" viewBox="0 0 12 10"><path d="M5.500.7L1.500 5l4 4.300M10.500.7L6.500 5l4 4.300" fill="none" stroke="#4b93de" strokeWidth="1.700" /></svg>
              </button>
            </div>
          </div>
        </div>
      </main>
      <footer className="flex h-[23px] items-center border-t border-[#87a0c1] bg-[linear-gradient(#dbe7f3,#a9bdd7)] pl-[3px] text-[#27406b]">
        <span className="border-r-2 border-[#8f9cb0] pr-[6px] leading-[14px]">Opale bluePearl 7.00.20.00000</span>
        <span className="ml-[4px] border-r-2 border-[#8f9cb0] pr-[6px] leading-[14px]">DLL 7.0.20.0.0</span>
      </footer>
    </div>
  );
}
